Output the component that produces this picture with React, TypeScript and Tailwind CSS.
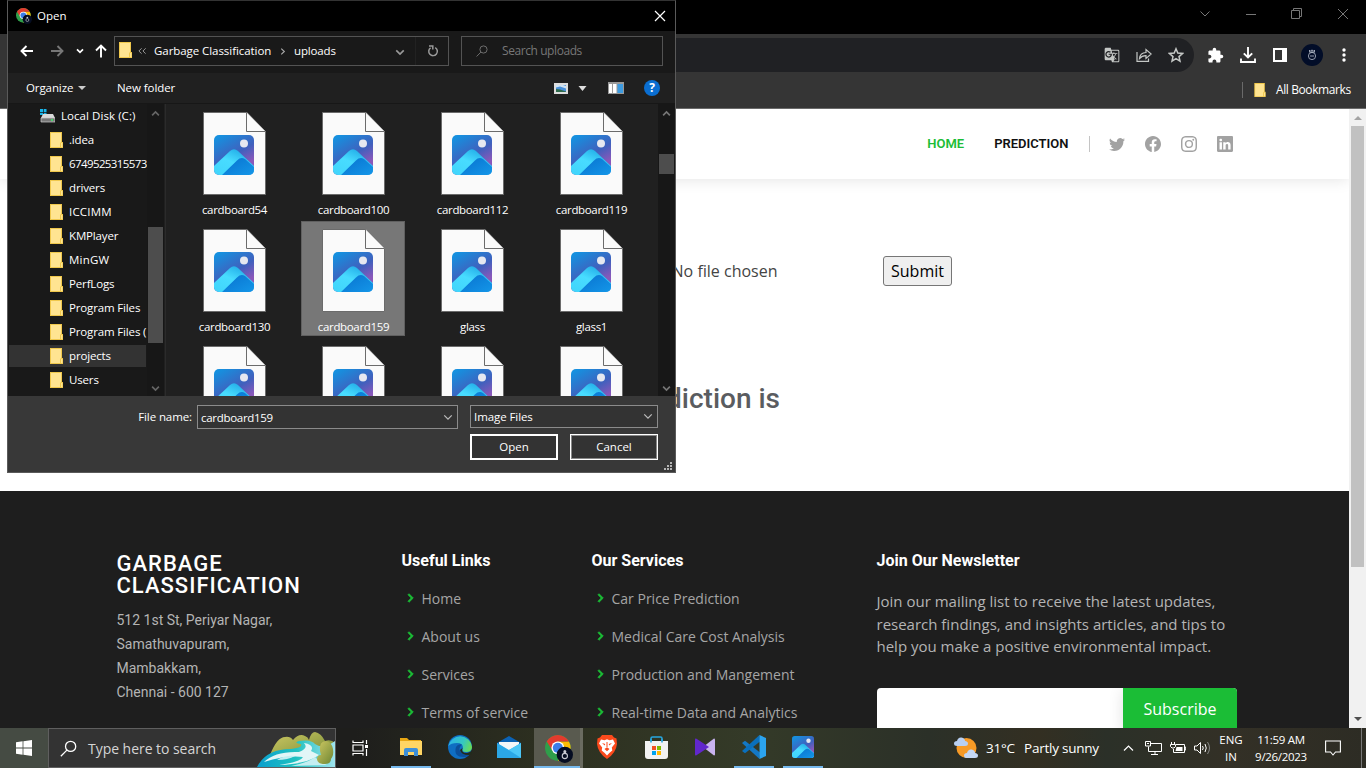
import { useId } from "react";
import type { ReactNode } from "react";
import { BsFacebook, BsInstagram, BsLinkedin, BsTwitter } from "react-icons/bs";
import { BiChevronRight } from "react-icons/bi";
import { MdExtension, MdGTranslate } from "react-icons/md";

const ui = "font-['Open_Sans','Noto_Sans',sans-serif]";

/* ---------- shared glyphs ---------- */

function ChromeLogo({ className }: { className: string }) {
  return (
    <svg viewBox="0 0 48 48" className={className}>
      <circle cx="22" cy="22" r="22" fill="#2f9e4a" />
      <path d="M22 11H41A22 22 0 0 1 22 44L31 27Z" fill="#fbbc04" />
      <path d="M3 11A22 22 0 0 1 41 11H22L13 27Z" fill="#e33b2e" />
      <circle cx="22" cy="22" r="11" fill="#fff" />
      <circle cx="22" cy="22" r="8.600" fill="#3b7de8" />
      <circle cx="34" cy="34" r="14" fill="#050d22" />
      <circle cx="34" cy="36" r="4.500" fill="none" stroke="#c8cbd4" strokeWidth="1.800" />
      <circle cx="34" cy="28.500" r="2.600" fill="#c8cbd4" />
    </svg>
  );
}

function Folder({ className = "h-4 w-[13px]" }: { className?: string }) {
  return (
    <svg viewBox="0 0 13 16" className={`shrink-0 ${className}`}>
      <path d="M0 0H12V10H13V16H0Z" fill="#f0c84c" />
      <path d="M1 1H11V10L10 11V15H1Z" fill="#ffe491" />
      <path d="M11 11H12.4V15H11Z" fill="#ffe491" />
    </svg>
  );
}

function PhotoArt({ className }: { className: string }) {
  const id = useId().replace(/[^a-zA-Z0-9]/g, "");
  return (
    <svg viewBox="0 0 40 40" className={className}>
      <defs>
        <linearGradient id={`${id}s`} x1=".2" y1="0" x2=".8" y2="1">
          <stop offset="0" stopColor="#1690df" />
          <stop offset=".5" stopColor="#4060bd" />
          <stop offset=".8" stopColor="#8a58ba" />
        </linearGradient>
        <linearGradient id={`${id}m`} x1="0" y1="1" x2=".7" y2="0">
          <stop offset="0" stopColor="#40d4fb" />
          <stop offset=".55" stopColor="#48dcff" />
          <stop offset="1" stopColor="#1fa9e6" />
        </linearGradient>
        <linearGradient id={`${id}f`} x1="0" y1="0" x2="1" y2="1">
          <stop offset="0" stopColor="#0872cf" />
          <stop offset="1" stopColor="#1496e8" />
        </linearGradient>
        <clipPath id={`${id}c`}>
          <rect width="40" height="40" rx="5" />
        </clipPath>
      </defs>
      <g clipPath={`url(#${id}c)`}>
        <rect width="40" height="40" fill={`url(#${id}s)`} />
        <path d="M0 31 16 16Q20 12.500 24 16L40 31V40H0Z" fill={`url(#${id}m)`} />
        <path d="M8 40 23 25.500Q27 21.500 31 24L40 32V40Z" fill={`url(#${id}f)`} />
      </g>
      <circle cx="30" cy="8.500" r="4" fill="#e6e8f0" />
    </svg>
  );
}

function FileIcon() {
  return (
    <div className="relative h-[83px] w-[63px] shrink-0">
      <svg viewBox="0 0 63 83" className="h-[83px] w-[63px]">
        <path d="M.5 .5H44L62.500 19.500V82.500H.5Z" fill="#fafafa" stroke="#6b6b6b" />
        <path d="M43.500 .5V19.500H62.500" fill="#fafafa" stroke="#6b6b6b" />
      </svg>
      <PhotoArt className="absolute left-[11px] top-[23px] size-10" />
    </div>
  );
}

function Chevron({ up = false, className, width = 1.5 }: { up?: boolean; className: string; width?: number }) {
  return (
    <svg viewBox="0 0 12 8" className={className} fill="none" stroke="currentColor" strokeWidth={width}>
      <path d={up ? "M1.500 6.500 6 2 10.500 6.500" : "M1.500 1.500 6 6 10.500 1.500"} />
    </svg>
  );
}

function Magnifier({ className }: { className: string }) {
  return (
    <svg viewBox="0 0 16 16" className={className} fill="none" stroke="currentColor" strokeWidth="1.200">
      <circle cx="10" cy="6" r="4.800" />
      <path d="M6.500 9.500.8 15.300" />
    </svg>
  );
}

/* ---------- browser ---------- */

function BrowserChrome() {
  return (
    <header className="shrink-0">
      <div className="flex h-[34px] justify-end bg-black text-[#777]">
        <div className="flex w-[46px] items-center justify-center pb-1.5">
          <Chevron className="h-2 w-3" width={1} />
        </div>
        <div className="flex w-[46px] items-center justify-center pb-1.5">
          <span className="h-px w-[10px] bg-[#777]" />
        </div>
        <div className="flex w-[46px] items-center justify-center pb-1.5">
          <svg viewBox="0 0 12 12" className="size-3" fill="none" stroke="currentColor">
            <path d="M.5 2.500H8.500V10.500H.5ZM2.500 2.500V.5H10.500V8.500H8.500" />
          </svg>
        </div>
        <div className="flex w-[46px] items-center justify-center pb-1.5">
          <svg viewBox="0 0 12 12" className="size-3" fill="none" stroke="currentColor">
            <path d="M1 1 11 11M11 1 1 11" />
          </svg>
        </div>
      </div>
      <div className="flex h-[42px] bg-[#353535] pt-1">
        <div className="ml-10 flex h-[34px] w-[1154px] items-center justify-end rounded-full bg-[#202124] pr-[10px] text-[#c4c7c5]">
          <MdGTranslate className="mr-4 size-4" />
          <svg viewBox="0 0 16 16" className="mr-4 size-4" fill="none" stroke="currentColor" strokeWidth="1.200">
            <path d="M1 5V14.300H12.500V11.500" />
            <path d="M3.500 11.500Q4 5.800 10 5.500V2.500L15.200 7 10 11.500V8.600Q6 8.500 3.500 11.500Z" />
          </svg>
          <svg viewBox="0 0 16 16" className="size-4" fill="none" stroke="currentColor" strokeWidth="1.500">
            <path d="M8 1.800 9.800 6.100 14.500 6.500 11 9.600 12 14.200 8 11.700 4 14.200 5 9.600 1.500 6.500 6.200 6.100Z" />
          </svg>
        </div>
        <div className="flex h-[34px] items-center text-white">
          <MdExtension className="ml-[13px] size-[17px]" />
          <svg viewBox="0 0 16 16" className="ml-4 size-4" fill="none" stroke="currentColor" strokeWidth="1.900">
            <path d="M8 0V10M3.800 6.300 8 10.500 12.200 6.300M1 11.500V15H15V11.500" />
          </svg>
          <svg viewBox="0 0 14 14" className="ml-[17px] size-[14px]">
            <path d="M0 0H14V14H0ZM2 2V12H9V2Z" fill="currentColor" fillRule="evenodd" />
          </svg>
          <span className="ml-[14px] flex size-[22px] items-center justify-center rounded-full bg-[#020d28]">
            <svg viewBox="0 0 12 12" className="size-3" fill="none" stroke="#b9bfcd" strokeWidth=".8">
              <circle cx="6" cy="7" r="3.600" />
              <path d="M3.500 1 5 2.500 6 .8 7 2.500 8.500 1V3.200H3.500ZM4 7H8" />
            </svg>
          </span>
          <svg viewBox="0 0 4 14" className="ml-[19px] h-[14px] w-1" fill="currentColor">
            <circle cx="2" cy="2" r="1.700" />
            <circle cx="2" cy="7" r="1.700" />
            <circle cx="2" cy="12" r="1.700" />
          </svg>
        </div>
      </div>
      <div className={`flex h-[33px] items-center justify-end border-b border-[#6a6a6a] bg-[#353535] pb-[5px] pr-[15px] text-white ${ui}`}>
        <span className="h-4 w-px bg-[#6a6a6a]" />
        <Folder className="ml-[11px] h-[14px] w-3" />
        <span className="ml-[10px] w-[75px] whitespace-nowrap text-[12px] tracking-[-0.400px]">All Bookmarks</span>
      </div>
    </header>
  );
}

const usefulLinks = ["Home", "About us", "Services", "Terms of service"];
const services = ["Car Price Prediction", "Medical Care Cost Analysis", "Production and Mangement", "Real-time Data and Analytics"];

function LinkColumn({ title, links, className }: { title: string; links: string[]; className: string }) {
  return (
    <div className={`shrink-0 ${className}`}>
      <h4 className="font-[Roboto] text-[16px] font-bold leading-[19px] text-white">{title}</h4>
      <ul className="mt-[9px]">
        {links.map((l) => (
          <li key={l} className="flex h-[38px] items-center text-[14px] text-[#a5a5a5]">
            <BiChevronRight className="-ml-px mr-[3px] size-[18px] stroke-[#1bbd36] stroke-1 text-[#1bbd36]" />
            <span className="whitespace-nowrap">{l}</span>
          </li>
        ))}
      </ul>
    </div>
  );
}

function WebPage() {
  return (
    <div className="flex h-[619px] shrink-0 bg-white">
      <div className="flex w-[1349px] flex-col overflow-hidden font-['Open_Sans',sans-serif]">
        <nav className="flex h-[70px] shrink-0 items-center justify-end pr-[116.500px] font-[Roboto] text-[13px] font-semibold shadow-[0_0_15px_rgba(0,0,0,0.12)]">
          <a className="text-[#1bbd36]">HOME</a>
          <a className="ml-[30px] text-[#111]">PREDICTION</a>
          <span className="ml-5 h-4 w-px bg-[#c4c4c4]" />
          <div className="ml-[19px] flex gap-5 text-[#a2a2a2]">
            <BsTwitter className="size-4" />
            <BsFacebook className="size-4" />
            <BsInstagram className="size-4" />
            <BsLinkedin className="size-4" />
          </div>
        </nav>
        <main className="h-[312px] shrink-0 pt-[77px] text-[#444]">
          <div className="flex items-center">
            <span className="w-[777.500px] text-right text-[16px] leading-6 text-[#444]">No file chosen</span>
            <button className="ml-[105.500px] h-[30px] w-[69px] rounded-[3px] border border-[#767676] bg-[#efefef] text-[16px] leading-[26px] text-black">
              Submit
            </button>
          </div>
          <h2 className="mt-[96px] w-[780px] text-right font-[Roboto] text-[28px] font-medium leading-[34px] text-[#5a5c60]">
            The Prediction is
          </h2>
        </main>
        <footer className="flex flex-1 bg-[#1e1e1e] pl-[116.500px] pt-[60px]">
          <div className="w-[285px] shrink-0 font-[Roboto]">
            <h3 className="mt-[2px] text-[22px] font-medium leading-[22px] tracking-[1px] text-white">
              GARBAGE
              <br />
              CLASSIFICATION
            </h3>
            <p className="mt-[11px] text-[14px] leading-6 text-[#b4b4b4]">
              512 1st St, Periyar Nagar,
              <br />
              Samathuvapuram,
              <br />
              Mambakkam,
              <br />
              Chennai - 600 127
            </p>
          </div>
          <LinkColumn title="Useful Links" links={usefulLinks} className="w-[190px]" />
          <LinkColumn title="Our Services" links={services} className="w-[285px]" />
          <div className="w-[360.500px]">
            <h4 className="font-[Roboto] text-[16px] font-bold leading-[19px] text-white">Join Our Newsletter</h4>
            <p className="mt-[20px] whitespace-nowrap text-[15px] leading-[22.500px] text-[#b4b4b4]">
              Join our mailing list to receive the latest updates,
              <br />
              research findings, and insights articles, and tips to
              <br />
              help you make a positive environmental impact.
            </p>
            <div className="mt-[30px] flex h-[44px] overflow-hidden rounded-[4px] bg-white">
              <span className="flex-1" />
              <span className="h-full w-[114px] bg-[#1bbd36] text-center text-[16px] leading-[42px] text-white shadow-[0_2px_15px_rgba(0,0,0,0.12)]">
                Subscribe
              </span>
            </div>
          </div>
        </footer>
      </div>
      <div className="flex w-[17px] flex-col items-center bg-[#f1f1f1]">
        <svg viewBox="0 0 8 4" className="mt-[7px] h-1 w-2 shrink-0">
          <path d="M0 4 4 0 8 4Z" fill="#a3a3a3" />
        </svg>
        <span className="mt-[6px] h-[441px] w-[13px] shrink-0 bg-[#c1c1c1]" />
        <svg viewBox="0 0 8 4" className="mb-[7px] mt-auto h-1 w-2 shrink-0">
          <path d="M0 0 4 4 8 0Z" fill="#505050" />
        </svg>
      </div>
    </div>
  );
}

/* ---------- open dialog ---------- */

const tree = [".idea", "6749525315573", "drivers", "ICCIMM", "KMPlayer", "MinGW", "PerfLogs", "Program Files", "Program Files (", "projects", "Users"];
const files = ["cardboard54", "cardboard100", "cardboard112", "cardboard119", "cardboard130", "cardboard159", "glass", "glass1", "", "", "", ""];

function treeTracking(name: string) {
  if (name === "6749525315573") return "tracking-[-0.600px]";
  if (name === "ICCIMM" || name === "MinGW") return "tracking-[0.200px]";
  return "tracking-[-0.150px]";
}

function OpenDialog() {
  return (
    <section className={`absolute left-[7px] top-0 z-10 flex h-[473px] w-[669px] flex-col border border-[#5a5a5a] border-t-[#333] bg-[#202020] text-[12px] text-white ${ui}`}>
      <div className="flex h-[30px] shrink-0 items-center bg-black pl-2 pr-[9px]">
        <ChromeLogo className="size-4" />
        <span className="ml-[5px] text-[11.500px]">Open</span>
        <svg viewBox="0 0 12 12" className="ml-auto size-3" fill="none" stroke="#fff" strokeWidth="1.200">
          <path d="M1 1 11 11M11 1 1 11" />
        </svg>
      </div>

      <div className="flex h-[42px] shrink-0 items-center bg-[#191919] pb-[2px]">
        <svg viewBox="0 0 14 12" className="ml-[12px] h-3 w-[14px]" fill="none" stroke="#fff" strokeWidth="1.900">
          <path d="M13 6H1.500M6.500 1 1.500 6 6.500 11" />
        </svg>
        <svg viewBox="0 0 14 12" className="ml-4 h-3 w-[14px]" fill="none" stroke="#777" strokeWidth="1.900">
          <path d="M1 6H12.500M7.500 1 12.500 6 7.500 11" />
        </svg>
        <Chevron className="ml-3 h-[6px] w-2" width={2.6} />
        <svg viewBox="0 0 12 14" className="ml-[11px] h-[14px] w-3" fill="none" stroke="#fff" strokeWidth="1.900">
          <path d="M6 13.500V1.500M1 6.500 6 1.500 11 6.500" />
        </svg>
        <div className="ml-[7px] flex h-[30px] w-[335px] items-center border border-[#535353]">
          <Folder className="mb-0.5 ml-1 h-4 w-[13px]" />
          <svg viewBox="0 0 10 8" className="ml-[6px] h-2 w-[9px]" fill="none" stroke="#999" strokeWidth="1.100">
            <path d="M4 1 1 4 4 7M8.500 1 5.500 4 8.500 7" />
          </svg>
          <span className="ml-[7px] w-[120px] whitespace-nowrap text-[11.500px] tracking-[-0.060px]">Garbage Classification</span>
          <svg viewBox="0 0 6 8" className="ml-[6px] h-[7px] w-[6px]" fill="none" stroke="#aaa" strokeWidth="1.300">
            <path d="M1 .8 4.500 4 1 7.200" />
          </svg>
          <span className="ml-[8px] text-[11.500px] tracking-[-0.150px]">uploads</span>
          <Chevron className="ml-auto mt-[2px] h-[7px] w-[10px] text-[#999]" width={2} />
          <span className="ml-[10px] h-full w-px bg-[#222]" />
          <svg viewBox="0 0 12 12" className="ml-[11px] mr-[9px] size-3" fill="none" stroke="#999" strokeWidth="1.500">
            <path d="M8.200 2.600A4.300 4.300 0 1 1 3.600 2.800M2 1H5.800V4.500" />
          </svg>
        </div>
        <div className="ml-3 flex h-[30px] w-[202px] items-center border border-[#535353] text-[#777]">
          <Magnifier className="ml-[14px] size-3" />
          <span className="ml-[14px] text-[12px] tracking-[-0.420px]">Search uploads</span>
        </div>
      </div>

      <div className="flex h-[31px] shrink-0 items-center border-b border-[#171717] bg-[#202020] text-[11.500px]">
        <span className="ml-[18px] w-[48px] tracking-[-0.100px]">Organize</span>
        <svg viewBox="0 0 8 4" className="ml-[4px] h-1 w-2">
          <path d="M0 0H8L4 4Z" fill="#ccc" />
        </svg>
        <span className="ml-[31px] tracking-[-0.070px]">New folder</span>
        <svg viewBox="0 0 14 11" className="ml-auto h-[11px] w-[14px]">
          <rect width="14" height="11" fill="#ddd" />
          <rect x="2" y="2" width="10" height="7" fill="#4a90d9" />
          <path d="M2 4.500 6 3.500 12 5.500V3L9 2H2Z" fill="#cfe3f5" />
          <path d="M2 6 6 6.500 12 8.500V9H2Z" fill="#2f6b4d" />
        </svg>
        <svg viewBox="0 0 8 5" className="ml-[10px] h-[5px] w-[9px]">
          <path d="M0 0H8L4 5Z" fill="#ddd" />
        </svg>
        <svg viewBox="0 0 16 12" className="ml-[21px] h-3 w-4">
          <rect width="16" height="12" fill="#999" />
          <path d="M1 2H4V11H1ZM5 2H8.500V11H5Z" fill="#fff" />
          <rect x="9.500" y="2" width="5.500" height="9" fill="#3d9be0" />
        </svg>
        <span className="ml-[20px] mr-[15px] flex size-4 items-center justify-center rounded-full bg-[#0a6ed1] text-[12px] font-bold leading-none">?</span>
      </div>

      <div className="flex h-[292px] shrink-0 overflow-hidden">
        <div className="w-[139px] shrink-0 whitespace-nowrap bg-[#191919] text-[11.500px]">
          <div className="flex h-6 items-center pl-8">
            <svg viewBox="0 0 15 14" className="h-[14px] w-[15px]">
              <path d="M0 0H3V3H0ZM3.700 0H6.500V3H3.700ZM0 3.700H3V6H0ZM3.700 3.700H6.500V6H3.700Z" fill="#19b5ea" />
              <path d="M3 5H13L15 9H1Z" fill="#d9d9d9" />
              <path d="M1 9H15V13H1Z" fill="#777" stroke="#ccc" strokeWidth=".7" />
              <circle cx="12" cy="11" r=".9" fill="#3f6" />
            </svg>
            <span className="ml-[6px] tracking-[0.060px]">Local Disk (C:)</span>
          </div>
          {tree.map((name) => (
            <div key={name} className="flex h-6 items-center">
              <div className={`ml-px flex h-[22px] w-[137px] shrink-0 items-center pl-[41px] ${name === "projects" ? "bg-[#333]" : ""}`}>
                <Folder />
                <span className={`ml-[6px] ${treeTracking(name)}`}>{name}</span>
              </div>
            </div>
          ))}
        </div>
        <div className="flex w-[17px] shrink-0 flex-col items-center bg-[#171717] text-[#666]">
          <Chevron up className="mt-[6px] h-[7px] w-[9px]" width={2.2} />
          <span className="mt-[110px] h-[116px] w-[15px] shrink-0 bg-[#4d4d4d]" />
          <Chevron className="mb-1 mt-auto h-[7px] w-[9px]" width={2.2} />
        </div>
        <span className="ml-px w-px shrink-0 bg-[#2b2b2b]" />
        <div className="grid w-[492px] shrink-0 grid-cols-[repeat(4,104px)] content-start gap-x-[15px] gap-y-[2px] pl-4">
          {files.map((name, i) => (
            <div key={i} className={`flex h-[115px] flex-col items-center border pl-px ${name === "cardboard159" ? "border-[#606060] bg-[#777]" : "border-transparent"}`}>
              <div className="mt-[7px]">
                <FileIcon />
              </div>
              <span className="mt-[7px] text-[11.500px] leading-4 tracking-[-0.340px]">{name}</span>
            </div>
          ))}
        </div>
        <div className="flex w-[17px] shrink-0 flex-col items-center bg-[#171717] text-[#777]">
          <Chevron up className="mt-[6px] h-[7px] w-[9px]" width={2.2} />
          <span className="mt-[37px] h-5 w-[15px] shrink-0 bg-[#4d4d4d]" />
          <Chevron className="mb-1 mt-auto h-[7px] w-[9px]" width={2.2} />
        </div>
      </div>

      <div className="relative flex flex-1 justify-end bg-[#383838] pr-[17px] pt-[9px] text-[11.500px]">
        <span className="mr-[5px] mt-[4px] leading-4 tracking-[-0.100px]">File name:</span>
        <div className="mr-3 flex h-6 w-[261px] items-center justify-between border border-[#8b8b8b] bg-[#333] pl-[3px] pr-1 pt-px tracking-[-0.300px]">
          cardboard159
          <Chevron className="h-[7px] w-[10px] text-[#bbb]" />
        </div>
        <div className="w-[188px]">
          <div className="flex h-[23px] items-center justify-between border border-[#8b8b8b] bg-[#333] pl-[3px] pr-1 tracking-[-0.080px]">
            Image Files
            <Chevron className="h-[7px] w-[10px] text-[#bbb]" />
          </div>
          <div className="mt-[6px] flex justify-between">
            <button className="h-[26px] w-[88px] border-2 border-white bg-[#333]">Open</button>
            <button className="h-[26px] w-[88px] border border-white bg-[#333] shadow-[inset_0_0_0_1px_#888]">Cancel</button>
          </div>
        </div>
        <svg viewBox="0 0 8 8" className="absolute bottom-[2px] right-[3px] size-2" fill="#b5b5b5">
          <path d="M6 0H8V2H6ZM6 3H8V5H6ZM3 3H5V5H3ZM0 6H2V8H0ZM3 6H5V8H3ZM6 6H8V8H6Z" />
        </svg>
      </div>
    </section>
  );
}

/* ---------- taskbar ---------- */

function TaskbarApp({ children, state = "idle" }: { children: ReactNode; state?: "idle" | "open" | "active" }) {
  return (
    <div className={`flex h-10 w-[49px] shrink-0 flex-col items-center ${state === "active" ? "border-r-[3px] border-[#6a6b60] bg-[#595a4f]" : ""}`}>
      <div className={`flex h-[38px] items-center ${state === "active" ? "pl-1 pt-1" : ""}`}>{children}</div>
      {state !== "idle" && <span className={`h-[2px] bg-[#76b9ed] ${state === "active" ? "w-full" : "w-10"}`} />}
    </div>
  );
}

function Landscape() {
  return (
    <svg viewBox="0 0 78 36" className="mt-auto h-[36px] w-[78px]">
      <defs>
        <linearGradient id="river" x1="0" x2="1">
          <stop offset="0" stopColor="#0a9fce" />
          <stop offset=".5" stopColor="#1fc1c0" />
          <stop offset="1" stopColor="#9fe4ee" />
        </linearGradient>
        <linearGradient id="hill" x1="0" y1="0" x2="1" y2="1">
          <stop offset="0" stopColor="#cfc963" />
          <stop offset="1" stopColor="#6d8532" />
        </linearGradient>
      </defs>
      <path d="M13 24Q20 6 28 6Q33 5 36 9Q42 2 48 5Q51 6 52 9Q54 1 58 1Q64 2 68 10Q74 8 78 12V30H13Z" fill="url(#hill)" />
      <path d="M0 36Q9 18 34 18Q46 17 44 13Q36 12 42 10Q54 8 58 13Q66 19 78 10V36Z" fill="url(#river)" />
      <path d="M7 31Q18 20 42 21Q52 17 47 12Q58 14 54 20L62 24Q50 33 22 34Q44 31 46 26Q30 24 7 31Z" fill="#e2f6f7" />
      <path d="M20 29Q28 24 38 25Q31 29 20 29ZM34 35Q50 32 58 26L62 30L70 34Z" fill="#c5eef1" />
      <path d="M63 20Q62 10 69 10Q74 10 76 18Q77 24 74 28Q74 33 68 33Q60 33 60 28Q60 24 64 24Z" fill="url(#hill)" />
    </svg>
  );
}

function Taskbar() {
  return (
    <div className={`flex h-10 shrink-0 bg-[linear-gradient(90deg,#1e1e1c_0%,#1e1e1c_26%,#2d3020_40%,#343a28_55%,#2b3028_68%,#332f22_76%,#2b3028_81%,#333026_90%,#2d2c24_100%)] text-white ${ui}`}>
      <div className="flex w-12 items-center justify-center bg-[#454b43]">
        <svg viewBox="0 0 16 16" className="size-4" fill="#fff">
          <path d="M0 2.200 6.600 1.300V7.600H0ZM7.400 1.200 16 0V7.600H7.400ZM0 8.400H6.600V14.700L0 13.800ZM7.400 8.400H16V16L7.400 14.800Z" />
        </svg>
      </div>
      <div className="flex w-[288px] items-center border border-[#5f5f5f] bg-[#333] text-[#d5d5d5]">
        <Magnifier className="ml-[11px] size-[17px] text-white" />
        <span className="ml-[11px] whitespace-nowrap text-[14px] tracking-[-0.040px]">Type here to search</span>
        <div className="ml-auto flex h-full">
          <Landscape />
        </div>
      </div>
      <div className="flex w-12 items-center justify-center">
        <svg viewBox="0 0 17 16" className="h-4 w-[17px]" fill="none" stroke="#fff" strokeWidth="1.200">
          <path d="M1 .5V2.500H11V.5M1 15.500V13.500H11V15.500M1 5H11V11H1ZM14.500 0V4M14.500 9V16" />
          <path d="M13 5H16V8H13Z" fill="#fff" stroke="none" />
        </svg>
      </div>
      <div className="ml-[2.500px] flex">
        <TaskbarApp state="open">
          <svg viewBox="0 0 22 18" className="h-[18px] w-[22px]">
            <path d="M0 0H7L9 2H21V8H0Z" fill="#e8a713" />
            <path d="M0 3H22V17H0Z" fill="#ffd564" />
            <path d="M4 18V12Q4 10 6 10H16Q18 10 18 12V18H14V14H8V18Z" fill="#3d8fd8" />
          </svg>
        </TaskbarApp>
        <TaskbarApp>
          <svg viewBox="0 0 24 24" className="size-6">
            <defs>
              <linearGradient id="edgeTop" x1="0" y1=".3" x2="1" y2=".6">
                <stop offset="0" stopColor="#2bb2ea" />
                <stop offset=".6" stopColor="#36c8c0" />
                <stop offset="1" stopColor="#69dc58" />
              </linearGradient>
            </defs>
            <circle cx="12" cy="12" r="12" fill="#0f6ec2" />
            <path d="M.3 11A12 12 0 0 1 24 12Q24 17 18 17Q13 17 15 13Q15 8 9 8Q3 8 .3 11Z" fill="url(#edgeTop)" />
            <path d="M8 12Q5 22 16 22Q20 22 22 18.500Q14 20 11.500 15Q11 12 14 9.500Q10 8.500 8 12Z" fill="#0b4f9b" />
            <path d="M14.500 13Q12.500 18 19 18Q22 18 24 15V19L21 20Q13 20 12 15Z" fill="#222a1c" />
          </svg>
        </TaskbarApp>
        <TaskbarApp>
          <svg viewBox="0 0 24 22" className="h-[22px] w-6">
            <path d="M0 7 12 0 24 7V12H0Z" fill="#0b62b4" />
            <path d="M2 6H22V18H2Z" fill="#f4f6f8" />
            <path d="M0 7 12 14 24 7V22H0Z" fill="#36b5f0" />
            <path d="M24 7V22L12 14Z" fill="#4cc7f7" />
            <path d="M0 22V7L24 22Z" fill="#2ba7e6" />
          </svg>
        </TaskbarApp>
        <TaskbarApp state="active">
          <ChromeLogo className="size-[28px]" />
        </TaskbarApp>
        <TaskbarApp>
          <svg viewBox="0 0 20 24" className="h-6 w-5">
            <path d="M5 0H15L17 2.500 19.500 3.500 20 9Q19 18 10 24Q1 18 0 9L.5 3.500 3 2.500Z" fill="#fb4a1c" />
            <path d="M4 4.500 7.500 5.200 10 4.300 12.500 5.200 16 4.500 18 8.500 14.800 12.500 15.300 15.500 12.300 18 10 20.500 7.700 18 4.700 15.500 5.200 12.500 2 8.500Z" fill="#fff" />
            <path d="M5 8 8.300 9 7.600 10.500ZM15 8 11.700 9 12.400 10.500ZM7.500 14 10 12.300 12.500 14 10 16.200Z" fill="#fb4a1c" />
            <path d="M9.500 7H10.500V12H9.500Z" fill="#fb4a1c" />
          </svg>
        </TaskbarApp>
        <TaskbarApp>
          <svg viewBox="0 0 23 23" className="size-[23px]">
            <path d="M6 7V2.500Q6 1 7.500 1H15.500Q17 1 17 2.500V7" fill="none" stroke="#27a6df" strokeWidth="1.600" />
            <path d="M0 5H23V20Q23 23 20 23H3Q0 23 0 20Z" fill="#f2f2f2" />
            <path d="M6 3V6.500M17 3V6.500" stroke="#27a6df" strokeWidth="1.600" />
            <path d="M7 10H11V14H7Z" fill="#f25022" />
            <path d="M12 10H16V14H12Z" fill="#7fba00" />
            <path d="M7 15H11V19H7Z" fill="#00a4ef" />
            <path d="M12 15H16V19H12Z" fill="#ffb900" />
          </svg>
        </TaskbarApp>
        <TaskbarApp>
          <svg viewBox="0 0 20 18" className="h-[18px] w-5">
            <path d="M19 .5Q20 .5 20 1.500V16.500Q20 17.500 19 17.500L8 9Z" fill="#c9b3f0" />
            <path d="M0 1.500Q0 0 1.500 .7L14 9 1.500 17.300Q0 18 0 16.500Z" fill="#6127cc" />
          </svg>
        </TaskbarApp>
        <TaskbarApp state="open">
          <svg viewBox="0 0 24 24" className="size-6">
            <path d="M17.500 24 18 17.500 3 5.800 0 8Z" fill="#1478c4" />
            <path d="M17.500 0 18 6.500 3 18.200 0 16Z" fill="#0a70bd" />
            <path d="M17.500 0 24 3V21L17.500 24Z" fill="#2ba4ef" />
          </svg>
        </TaskbarApp>
        <TaskbarApp state="open">
          <PhotoArt className="size-[22px]" />
        </TaskbarApp>
      </div>
      <div className="ml-auto flex items-center whitespace-nowrap">
        <svg viewBox="0 0 24 22" className="h-[22px] w-6">
          <circle cx="12.500" cy="11" r="10" fill="#f79a26" />
          <path d="M3 9Q0 9 0 6.500Q0 4 3 4Q4 0 7.500 .5Q11 1 11 4Q14 4.500 14 6.500Q14 9 11 9Z" fill="#b8cff2" />
          <path d="M12 21Q10 21 10 18.500Q10 16 13 16Q14 12 17.500 12.500Q21 13 21 16Q24 16.500 24 18.500Q24 21 21 21Z" fill="#c5d8f5" />
        </svg>
        <span className="ml-2 w-[38px] text-[13.500px] tracking-[-0.200px]">31°C</span>
        <span className="w-[98px] text-[13.500px] tracking-[-0.240px]">Partly sunny</span>
        <Chevron up className="h-2 w-[13px]" width={1.2} />
        <svg viewBox="0 0 17 14" className="ml-[10px] h-[14px] w-[17px]" fill="none" stroke="#fff">
          <path d="M6 2.500H16.500V10.500H3.500V5.500M10 10.500V13.500M6 13.500H13M.5 .5H5.500V5H.5ZM2 2.500H4" />
        </svg>
        <svg viewBox="0 0 16 12" className="ml-2 h-3 w-4" fill="none" stroke="#fff">
          <path d="M6 2.500H14.500V10.500H3.500V7M14.500 5H15.700V8H14.500M1.500 0V2.500M4.500 0V2.500M.5 2.500H5.500V4.500L4 6H2L.5 4.500Z" />
          <path d="M6.500 5H12.500V9H5.500Z" fill="#fff" stroke="none" />
        </svg>
        <svg viewBox="0 0 17 14" className="ml-2 h-[14px] w-[17px]" fill="none" stroke="#fff">
          <path d="M.5 5H3L6.500 1.500V12.500L3 9H.5ZM8.500 5Q10 7 8.500 9M11 3Q13.500 7 11 11" />
          <path d="M13.500 1Q17.500 7 13.500 13" stroke="#888" />
        </svg>
        <div className="ml-[3px] flex w-[34px] flex-col items-center text-[11.500px] leading-[17px]">
          <span>ENG</span>
          <span>IN</span>
        </div>
        <div className="flex w-[66px] flex-col items-center text-[11.500px] leading-[17px] tracking-[-0.300px]">
          <span>11:59 AM</span>
          <span>9/26/2023</span>
        </div>
        <svg viewBox="0 0 16 16" className="ml-[11px] size-4" fill="none" stroke="#fff" strokeWidth="1.100">
          <path d="M.6 1H15.400V12H10.500L8 15 5.500 12H.6Z" />
        </svg>
        <span className="ml-5 mr-1 h-10 w-px bg-[#777]" />
      </div>
    </div>
  );
}

export default function App() {
  return (
    <div className="relative flex h-[768px] w-[1366px] flex-col overflow-hidden bg-white">
      <BrowserChrome />
      <WebPage />
      <OpenDialog />
      <Taskbar />
    </div>
  );
}
